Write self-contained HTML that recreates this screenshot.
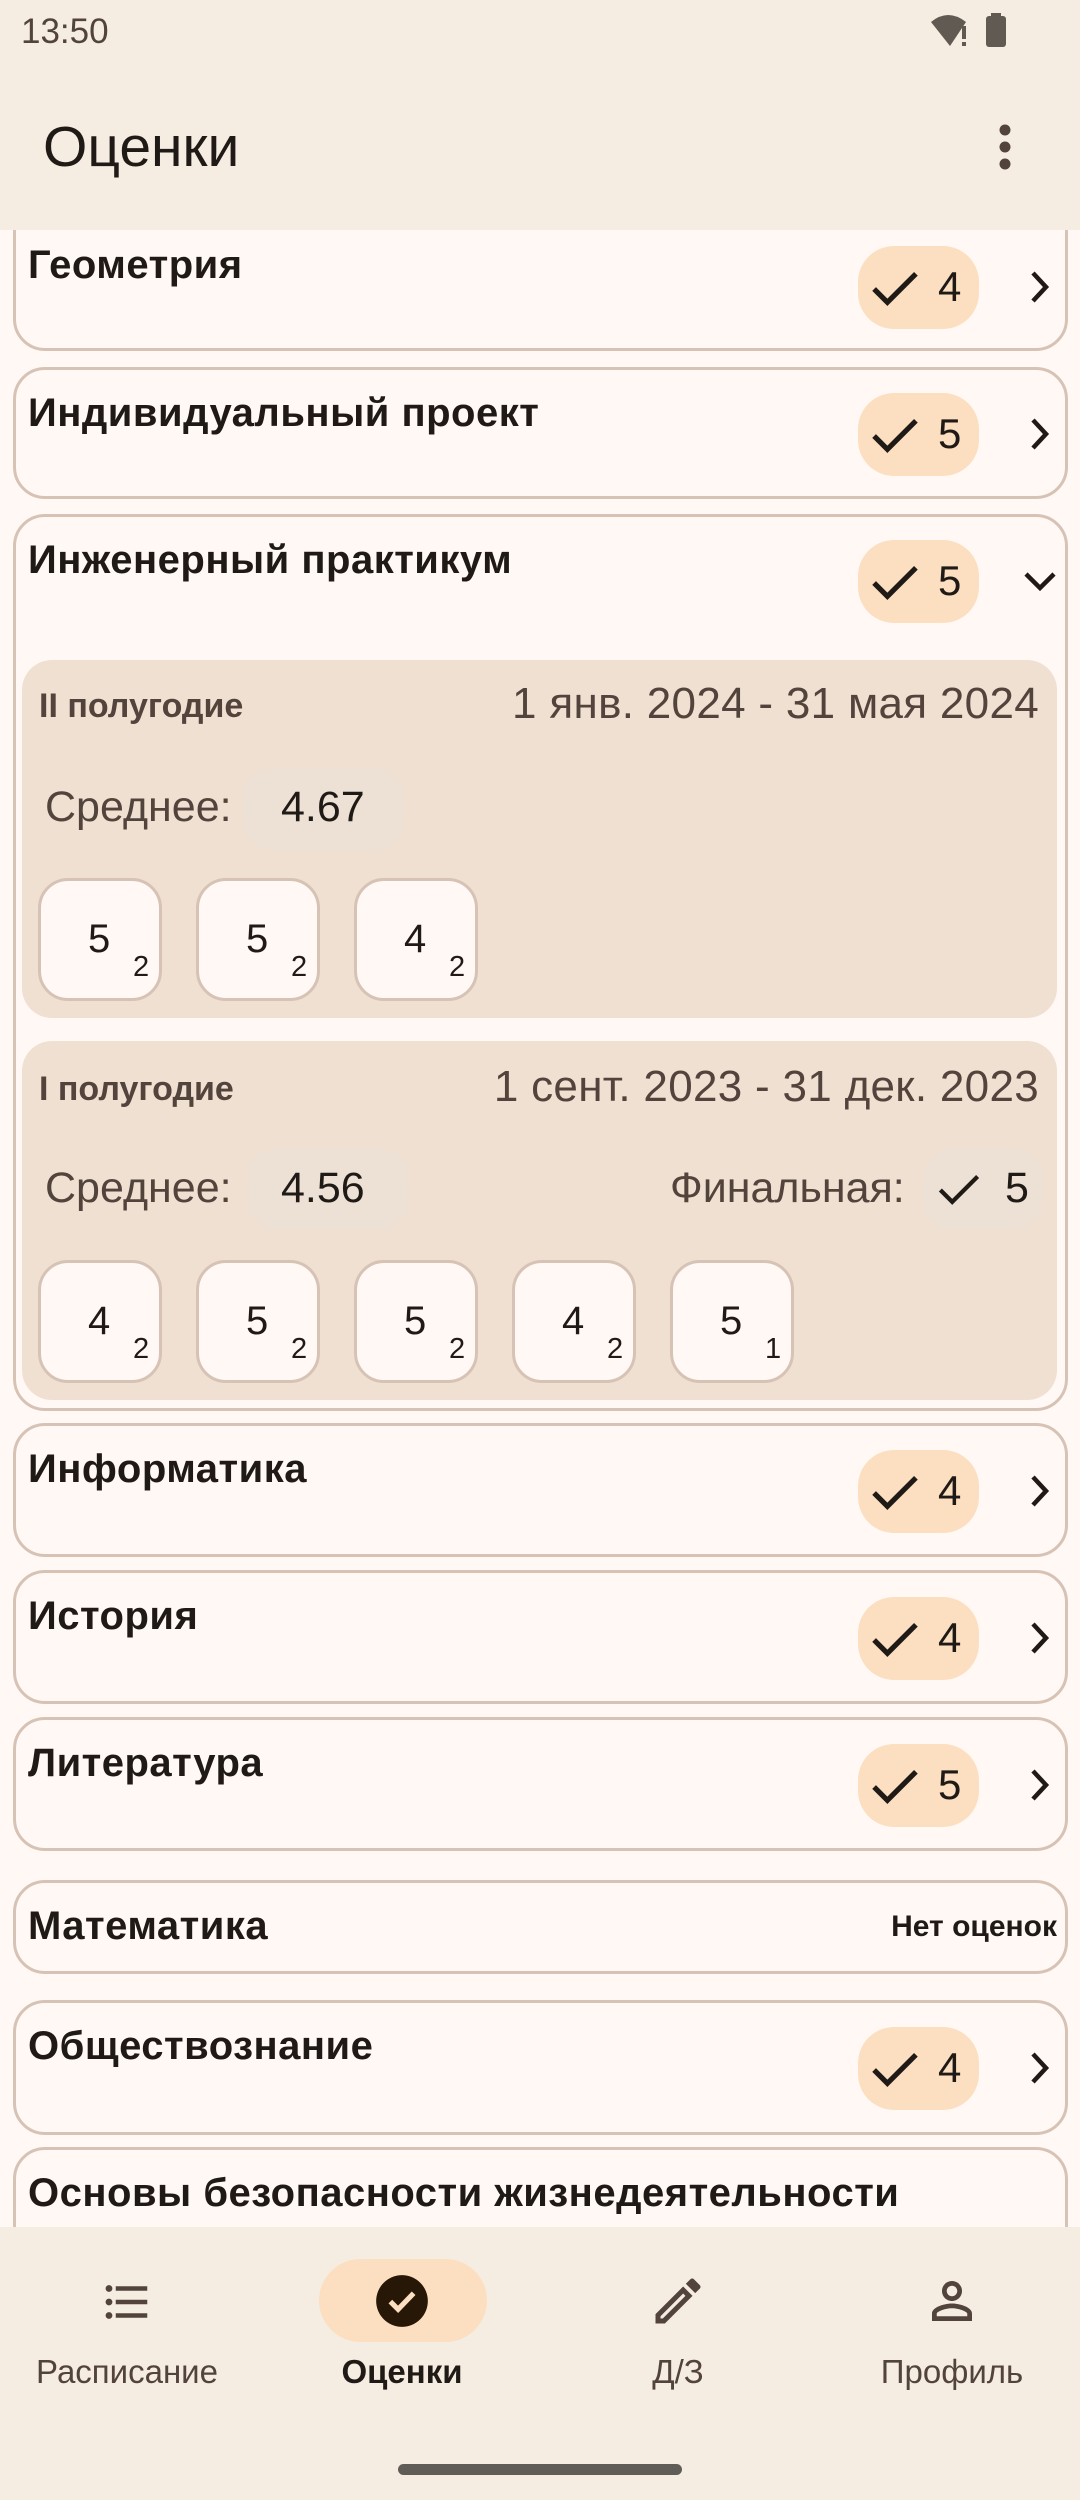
<!DOCTYPE html>
<html><head><meta charset="utf-8"><style>
*{margin:0;padding:0;box-sizing:border-box}
body{width:1080px;height:2500px;background:#fff8f4;font-family:"Liberation Sans",sans-serif;color:#201a17;position:relative;overflow:hidden}
.a{position:absolute}
.card{position:absolute;left:13px;width:1055px;border:3px solid #d7c3b5;border-radius:32px;background:#fff8f4}
.title{position:absolute;left:12px;font-size:40px;font-weight:700;line-height:44px;white-space:nowrap;letter-spacing:0.5px}
.badge{position:absolute;left:842px;width:121px;height:83px;border-radius:36px;background:#fcdfc1}
.badge svg{position:absolute;left:12px;top:24px}
.badge span{position:absolute;left:80px;top:17px;font-size:42px;line-height:48px}
.chev{position:absolute;left:1012px}
.panel{position:absolute;left:22px;width:1035px;background:#f0e0d1;border-radius:30px}
.sem{position:absolute;left:17px;font-size:34px;font-weight:700;color:#52443c}
.date{position:absolute;right:18px;font-size:44px;color:#52443c;letter-spacing:0.3px}
.lbl{position:absolute;font-size:43px;color:#52443c}
.chip{position:absolute;background:#ede0d5;border-radius:30px;height:82px}
.g{position:absolute;width:124px;height:123px;border:3px solid #d7c3b5;border-radius:30px;background:#fff8f4}
.g b{position:absolute;left:47px;top:36px;font-size:40px;font-weight:400}
.g i{position:absolute;left:92px;top:70px;font-size:29px;font-style:normal}
.nav{position:absolute;font-size:33px;color:#52443c;width:276px;text-align:center;top:2353px}
</style></head><body>
<div class="a" style="left:0;top:0;width:1080px;height:230px;background:#f5ece2;z-index:5"></div>
<div class="a" style="left:21px;top:12px;font-size:35px;color:#52443c;z-index:6">13:50</div>
<svg class="a" style="left:928px;top:12px;z-index:6" width="85" height="38" viewBox="0 0 85 38"><path d="M3 10 Q20 -4 38 10 L22 34 Z" fill="#605a52"/><rect x="34" y="14" width="4" height="13" fill="#605a52"/><rect x="34" y="30" width="4" height="4" fill="#605a52"/><rect x="58" y="4" width="20" height="31" rx="3" fill="#605a52"/><rect x="63" y="1" width="10" height="4" fill="#605a52"/></svg>
<div class="a" style="left:43px;top:114px;font-size:57px;z-index:6">Оценки</div>
<svg class="a" style="left:990px;top:122px;z-index:6" width="30" height="50"><circle cx="15" cy="8" r="5.5" fill="#52443c"/><circle cx="15" cy="25" r="5.5" fill="#52443c"/><circle cx="15" cy="42" r="5.5" fill="#52443c"/></svg>

<svg width="0" height="0" style="position:absolute"><defs>
<symbol id="ck" viewBox="0 0 52 40"><path d="M4 20 L18 34 L48 4" fill="none" stroke="#201a17" stroke-width="5.5"/></symbol>
<symbol id="cr" viewBox="0 0 24 36"><path d="M5 4 L18 18 L5 32" fill="none" stroke="#201a17" stroke-width="4.5"/></symbol>
</defs></svg>

<div class="card" style="top:150px;height:201px">
<div class="title" style="top:90px">Геометрия</div>
<div class="badge" style="top:93px"><svg width="50" height="38"><use href="#ck"/></svg><span>4</span></div>
<svg class="chev" style="top:116px" width="24" height="36"><use href="#cr"/></svg>
</div>
<div class="card" style="top:367px;height:132px">
<div class="title" style="top:21px">Индивидуальный проект</div>
<div class="badge" style="top:23px"><svg width="50" height="38"><use href="#ck"/></svg><span>5</span></div>
<svg class="chev" style="top:46px" width="24" height="36"><use href="#cr"/></svg>
</div>
<div class="card" style="top:514px;height:897px">
<div class="title" style="top:21px">Инженерный практикум</div>
<div class="badge" style="top:23px"><svg width="50" height="38"><use href="#ck"/></svg><span>5</span></div>
<svg class="a" style="left:1006px;top:52px" width="36" height="24"><path d="M4 5 L18 19 L32 5" fill="none" stroke="#201a17" stroke-width="4.5"/></svg>
</div>
<div class="panel" style="top:660px;height:358px">
<div class="sem" style="top:27px">II полугодие</div>
<div class="date" style="top:19px">1 янв. 2024 - 31 мая 2024</div>
<div class="chip" style="left:220px;top:108px;width:162px"></div>
<div class="lbl" style="left:23px;top:123px">Среднее:</div>
<div class="lbl" style="left:259px;top:123px;color:#201a17">4.67</div>
<div class="g" style="left:16px;top:218px"><b>5</b><i>2</i></div>
<div class="g" style="left:174px;top:218px"><b>5</b><i>2</i></div>
<div class="g" style="left:332px;top:218px"><b>4</b><i>2</i></div>
</div>
<div class="panel" style="top:1041px;height:359px">
<div class="sem" style="top:29px">I полугодие</div>
<div class="date" style="top:21px">1 сент. 2023 - 31 дек. 2023</div>
<div class="chip" style="left:226px;top:107px;width:160px"></div>
<div class="chip" style="left:901px;top:107px;width:120px"></div>
<div class="lbl" style="left:23px;top:123px">Среднее:</div>
<div class="lbl" style="left:259px;top:123px;color:#201a17">4.56</div>
<div class="lbl" style="left:648px;top:123px">Финальная:</div>
<svg class="a" style="left:915px;top:132px" width="44" height="34" viewBox="0 0 52 40"><path d="M4 20 L18 34 L48 4" fill="none" stroke="#201a17" stroke-width="5"/></svg>
<div class="lbl" style="left:983px;top:123px;color:#201a17">5</div>
<div class="g" style="left:16px;top:219px"><b>4</b><i>2</i></div>
<div class="g" style="left:174px;top:219px"><b>5</b><i>2</i></div>
<div class="g" style="left:332px;top:219px"><b>5</b><i>2</i></div>
<div class="g" style="left:490px;top:219px"><b>4</b><i>2</i></div>
<div class="g" style="left:648px;top:219px"><b>5</b><i>1</i></div>
</div>

<div class="card" style="top:1423px;height:134px">
<div class="title" style="top:21px">Информатика</div>
<div class="badge" style="top:24px"><svg width="50" height="38"><use href="#ck"/></svg><span>4</span></div>
<svg class="chev" style="top:47px" width="24" height="36"><use href="#cr"/></svg>
</div>
<div class="card" style="top:1570px;height:134px">
<div class="title" style="top:21px">История</div>
<div class="badge" style="top:24px"><svg width="50" height="38"><use href="#ck"/></svg><span>4</span></div>
<svg class="chev" style="top:47px" width="24" height="36"><use href="#cr"/></svg>
</div>
<div class="card" style="top:1717px;height:134px">
<div class="title" style="top:21px">Литература</div>
<div class="badge" style="top:24px"><svg width="50" height="38"><use href="#ck"/></svg><span>5</span></div>
<svg class="chev" style="top:47px" width="24" height="36"><use href="#cr"/></svg>
</div>
<div class="card" style="top:1880px;height:94px">
<div class="title" style="top:21px">Математика</div>
<div class="a" style="right:8px;top:27px;font-size:30px;font-weight:700">Нет оценок</div>
</div>
<div class="card" style="top:2000px;height:135px">
<div class="title" style="top:21px">Обществознание</div>
<div class="badge" style="top:24px"><svg width="50" height="38"><use href="#ck"/></svg><span>4</span></div>
<svg class="chev" style="top:47px" width="24" height="36"><use href="#cr"/></svg>
</div>
<div class="card" style="top:2147px;height:134px">
<div class="title" style="top:21px">Основы безопасности жизнедеятельности</div>
</div>

<div class="a" style="left:0;top:2227px;width:1080px;height:273px;background:#f5ece2"></div>
<div class="a" style="left:319px;top:2259px;width:168px;height:83px;border-radius:42px;background:#fcdfc1"></div>
<svg class="a" style="left:100px;top:2275px" width="54" height="54" viewBox="0 0 24 24"><path fill="#52443c" d="M4 10.5c-.83 0-1.5.67-1.5 1.5s.67 1.5 1.5 1.5 1.5-.67 1.5-1.5-.67-1.5-1.5-1.5zm0-6c-.83 0-1.5.67-1.5 1.5S3.17 7.5 4 7.5 5.5 6.83 5.5 6 4.83 4.5 4 4.5zm0 12c-.83 0-1.5.68-1.5 1.5s.68 1.5 1.5 1.5 1.5-.68 1.5-1.5-.67-1.5-1.5-1.5zM7 19h14v-2H7v2zm0-6h14v-2H7v2zm0-8v2h14V5H7z"/></svg>
<svg class="a" style="left:371px;top:2270px" width="62" height="62" viewBox="0 0 24 24"><circle cx="12" cy="12" r="10" fill="#271707"/><path d="M7.5 12.2 L10.5 15.2 L16.5 9" fill="none" stroke="#fcdfc1" stroke-width="2"/></svg>
<svg class="a" style="left:648px;top:2271px" width="60" height="60" viewBox="0 0 24 24"><path fill="#52443c" d="M3 17.25V21h3.75L17.81 9.94l-3.75-3.75L3 17.25zM5.92 19H5v-.92l9.06-9.06.92.92L5.92 19zM20.71 5.63l-2.34-2.34a1 1 0 0 0-1.41 0l-1.83 1.83 3.75 3.75 1.830-1.83a1 1 0 0 0 0-1.41z"/></svg>
<svg class="a" style="left:922px;top:2271px" width="60" height="60" viewBox="0 0 24 24"><path fill="#52443c" d="M12 5.9c1.16 0 2.1.94 2.1 2.1s-.94 2.1-2.1 2.1S9.9 9.16 9.9 8s.94-2.1 2.1-2.1m0 9c2.97 0 6.1 1.46 6.1 2.1v1.1H5.9V17c0-.64 3.13-2.1 6.1-2.1M12 4C9.79 4 8 5.79 8 8s1.79 4 4 4 4-1.79 4-4-1.79-4-4-4zm0 9c-2.67 0-8 1.34-8 4v3h16v-3c0-2.66-5.33-4-8-4z"/></svg>
<div class="nav" style="left:-11px">Расписание</div>
<div class="nav" style="left:264px;color:#201a17;font-weight:700">Оценки</div>
<div class="nav" style="left:540px">Д/З</div>
<div class="nav" style="left:814px">Профиль</div>
<div class="a" style="left:398px;top:2464px;width:284px;height:11px;border-radius:6px;background:#605c57"></div>
</body></html>
